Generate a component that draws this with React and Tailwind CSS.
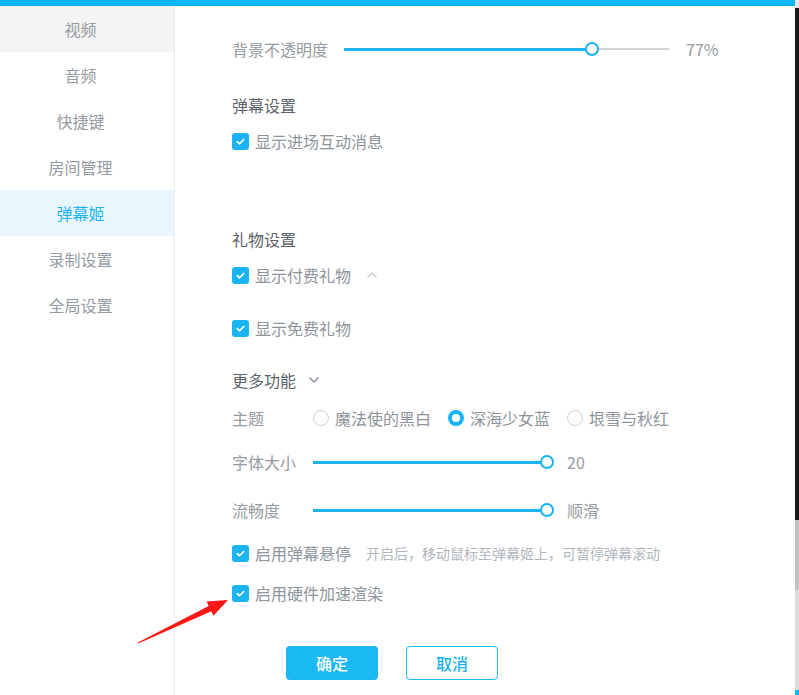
import React from 'react';

const font = { fontFamily: '"Noto Sans CJK SC", "Noto Sans", sans-serif' };

const menu = ['视频', '音频', '快捷键', '房间管理', '弹幕姬', '录制设置', '全局设置'];

const Check = ({ label, children }) => (
  <div className="flex items-center h-7">
    <span className="w-[17px] h-[17px] rounded-[3px] bg-[#1ab4f2] flex items-center justify-center shrink-0">
      <svg width="11" height="11" viewBox="0 0 12 12" fill="none">
        <path d="M2.5 6.2 L5 8.5 L9.5 3.8" stroke="white" strokeWidth="1.8" strokeLinecap="round" strokeLinejoin="round" />
      </svg>
    </span>
    <span className="ml-[6px] text-[16px] text-[#8d949b]">{label}</span>
    {children}
  </div>
);

const Radio = ({ label, on }) => (
  <div className="flex items-center">
    {on ? (
      <span className="w-[16px] h-[16px] rounded-full border-[4px] border-[#1ab4f2] bg-white" />
    ) : (
      <span className="w-[16px] h-[16px] rounded-full border border-[#ccd2d8] bg-white" />
    )}
    <span className="ml-[6px] text-[16px] text-[#8d949b]">{label}</span>
  </div>
);

const Thumb = ({ left }) => (
  <span className={`absolute top-0 w-[14px] h-[14px] rounded-full border-2 border-[#1ab4f2] bg-white ${left}`} />
);

const App = () => {
  return (
    <div className="w-[799px] h-[695px] flex bg-white overflow-hidden" style={font}>
      <div className="flex-1 flex flex-col">
        <div className="h-[6px] bg-[#0cb6f6]" />
        <div className="flex flex-1">
          {/* sidebar */}
          <div className="w-[175px] border-r border-[#ececec] flex flex-col">
            {menu.map((m, i) => (
              <div
                key={m}
                className={`h-[46px] flex items-center justify-center pr-[13px] text-[16px] ${
                  i === 0 ? 'bg-[#f4f4f4] text-[#959ba2]' : i === 4 ? 'bg-[#e9f6fd] text-[#1ab4f2]' : 'text-[#959ba2]'
                }`}
              >
                {m}
              </div>
            ))}
          </div>

          {/* content */}
          <div className="flex-1 pl-[57px] pt-[29px] flex flex-col">
            <div className="flex items-center h-7">
              <span className="text-[16px] text-[#959ba2]">背景不透明度</span>
              <div className="relative ml-[16px] w-[325px] h-[14px] flex items-center">
                <span className="w-[242px] h-[3px] bg-[#1ab4f2]" />
                <span className="flex-1 h-[2px] bg-[#d6d6d6]" />
                <Thumb left="left-[241px]" />
              </div>
              <span className="ml-[17px] text-[16px] text-[#959ba2]">77%</span>
            </div>

            <div className="mt-[28px] h-7 flex items-center text-[16px] text-[#5d636a]">弹幕设置</div>
            <div className="mt-[8px]">
              <Check label="显示进场互动消息" />
            </div>

            <div className="mt-[70px] h-7 flex items-center text-[16px] text-[#5d636a]">礼物设置</div>
            <div className="mt-[8px]">
              <Check label="显示付费礼物">
                <svg className="ml-[15px]" width="12" height="8" viewBox="0 0 12 8" fill="none">
                  <path d="M1.5 6.5 L6 2 L10.5 6.5" stroke="#c3c9cf" strokeWidth="1.3" />
                </svg>
              </Check>
            </div>
            <div className="mt-[25px]">
              <Check label="显示免费礼物" />
            </div>

            <div className="mt-[24px] h-7 flex items-center">
              <span className="text-[16px] text-[#5d636a]">更多功能</span>
              <svg className="ml-[12px]" width="12" height="8" viewBox="0 0 12 8" fill="none">
                <path d="M1.5 1.5 L6 6 L10.5 1.5" stroke="#7f8892" strokeWidth="1.3" />
              </svg>
            </div>

            <div className="mt-[10px] h-7 flex items-center">
              <span className="w-[81px] text-[16px] text-[#959ba2]">主题</span>
              <div className="flex items-center gap-[17px]">
                <Radio label="魔法使的黑白" />
                <Radio label="深海少女蓝" on />
                <Radio label="垠雪与秋红" />
              </div>
            </div>

            <div className="mt-[16px] h-7 flex items-center">
              <span className="w-[81px] text-[16px] text-[#959ba2]">字体大小</span>
              <div className="relative w-[241px] h-[14px] flex items-center">
                <span className="w-[234px] h-[3px] bg-[#1ab4f2]" />
                <Thumb left="left-[227px]" />
              </div>
              <span className="ml-[13px] text-[16px] text-[#959ba2]">20</span>
            </div>

            <div className="mt-[20px] h-7 flex items-center">
              <span className="w-[81px] text-[16px] text-[#959ba2]">流畅度</span>
              <div className="relative w-[241px] h-[14px] flex items-center">
                <span className="w-[234px] h-[3px] bg-[#1ab4f2]" />
                <Thumb left="left-[227px]" />
              </div>
              <span className="ml-[13px] text-[16px] text-[#959ba2]">顺滑</span>
            </div>

            <div className="mt-[15px]">
              <Check label="启用弹幕悬停">
                <span className="ml-[15px] text-[14px] text-[#b0b6bc]">开启后，移动鼠标至弹幕姬上，可暂停弹幕滚动</span>
              </Check>
            </div>
            <div className="mt-[12px]">
              <Check label="启用硬件加速渲染" />
            </div>

            <div className="mt-[39px] ml-[54px] flex gap-[28px]">
              <button className="w-[92px] h-[34px] rounded-[4px] bg-[#1ab9f4] text-white text-[16px] font-medium">确定</button>
              <button className="w-[92px] h-[34px] rounded-[4px] border border-[#1ab9f4] bg-white text-[#1ab4f2] text-[16px] font-medium">取消</button>
            </div>
          </div>
        </div>
      </div>

      {/* window edge behind */}
      <div className="w-[4px] flex flex-col">
        <div className="h-[8px] bg-[#e6e6e6]" />
        <div className="h-[512px] bg-[#1b1b1b]" />
        <div className="h-[70px] bg-[#c2c2c2]" />
        <div className="flex-1 bg-[#dcdcdc]" />
        <div className="h-[5px] bg-[#0cb6f6]" />
      </div>

      {/* red annotation arrow */}
      <svg className="absolute left-0 top-0 pointer-events-none" width="799" height="695" viewBox="0 0 799 695">
        <polygon
          points="137.8,642.5 208.7,605.9 206.6,601.4 228,600 213.4,615.8 211.3,611.3 138.2,643.5"
          fill="#ff1616"
        />
      </svg>
    </div>
  );
};

export default App;
